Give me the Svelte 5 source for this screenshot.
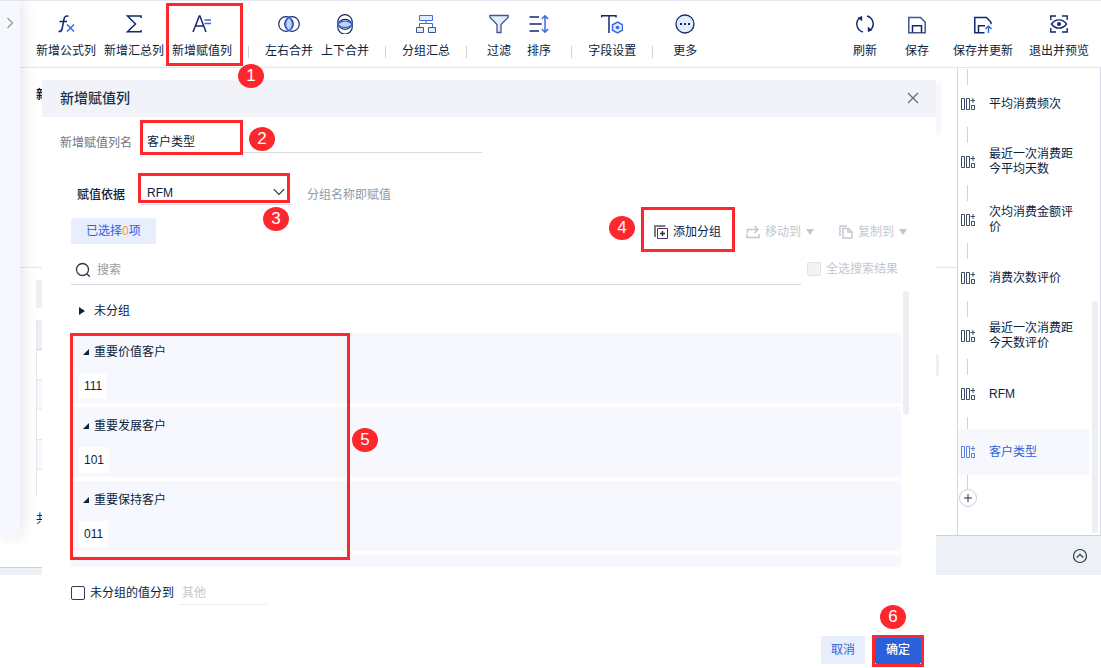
<script>
  // inner markup of the toolbar icons, all on a 22 x 20 grid
  const icons = {
    formula: `<g fill="none" stroke-width="1.5"><path stroke="#14296b" d="M13.5 2.2c-2.6-.9-4 .2-4.5 2.800L7.200 14.500c-.4 2.300-1.400 3.300-3.700 3M4.500 7.500h7.500"/><path stroke="#3a6be0" d="M12 10.500l7 7M19 10.500l-7 7"/></g>`,
    sum: `<path fill="none" stroke="#14296b" stroke-width="1.500" d="M18 4V2H4.500l8 8-8 7.800H18V16"/>`,
    assign: `<g fill="none" stroke-width="1.500"><path stroke="#14296b" d="M2 18L8.300 2h.6L15 18M4.500 12h8.200"/><path stroke="#3a6be0" d="M13.500 6H20M13.500 9.500H20"/></g>`,
    joinH: `<g fill="none" stroke="#14296b" stroke-width="1.200"><circle cx="8" cy="10" r="7.300"/><circle cx="14" cy="10" r="7.300"/><path fill="#bcd3fb" stroke="#3a6be0" d="M11 3.400c4.400 3.300 4.400 9.900 0 13.200-4.400-3.300-4.400-9.900 0-13.200z"/></g>`,
    joinV: `<g fill="none" stroke="#14296b" stroke-width="1.200"><circle cx="11" cy="8" r="7.300"/><circle cx="11" cy="12.700" r="7.300"/><path fill="#bcd3fb" stroke="#3a6be0" d="M4 10.300c3.300-4.200 10.700-4.200 14 0-3.300 4.200-10.700 4.200-14 0z"/></g>`,
    group: `<g fill="#e3ecfd" stroke="#3a6be0"><path d="M4.500 1.500h13v5h-13z"/><path fill="none" d="M11 6.500v3M4.500 13V9.500h13V13"/><path stroke="#43558a" d="M1.500 13.500h7v5h-7zM13.500 13.500h7v5h-7z"/></g>`,
    filter: `<path fill="#e3ecfd" stroke="#43558a" stroke-width="1.300" d="M1.800 1.500h18.400v1.800L13 10.500v8H9v-8L1.800 3.300z"/>`,
    sort: `<g fill="none" stroke-width="1.500"><path stroke="#14296b" d="M1.500 3h9.500M1.500 10h12M1.500 17h9.500"/><path stroke="#3a6be0" d="M17 2v16M13.800 5L17 1.800 20.200 5M13.800 15l3.200 3.200 3.200-3.200"/></g>`,
    field: `<g fill="none" stroke-width="1.500"><path stroke="#14296b" d="M.5 3.500V1.800h14.500v1.700M8 2v17"/><path fill="#e3ecfd" stroke="#3a6be0" d="M16.500 8l5 2.800v5.400l-5 2.800-5-2.800v-5.400z"/></g><circle cx="16.500" cy="13.500" r="1.800" fill="#3a6be0"/>`,
    more: `<circle cx="11" cy="10" r="9" fill="#e3ecfd" stroke="#14296b" stroke-width="1.300"/><g fill="#14296b"><path d="M6 9h2v2H6zM10 9h2v2h-2zM14 9h2v2h-2z"/></g>`,
    refresh: `<g fill="none" stroke="#14296b" stroke-width="1.500"><path d="M9 18A8.200 8.200 0 0 1 5 4.500M13 2A8.200 8.200 0 0 1 17 15.500"/></g><path fill="#14296b" d="M3.500 3.800L8.200 2v5.200zM18.500 16.200l-4.700 1.800v-5.200z"/>`,
    save: `<g fill="none" stroke="#43558a" stroke-width="1.500"><path d="M2.800 3.500h11.700l4.700 4.700v10.600H2.800z"/><path stroke="#14296b" d="M6.500 18.500v-6.700h9v6.700"/></g>`,
    saveUp: `<g fill="none" stroke="#14296b" stroke-width="1.500"><path d="M12.500 18.800H2.800V3.500h11.700l4.500 4.700v2"/><path d="M6.500 18.500v-6.700h6.500"/><path stroke="#3a6be0" d="M16.500 19v-6.500M13.500 15l3-3 3 3"/></g>`,
    preview: `<g fill="none" stroke="#14296b" stroke-width="1.400"><path d="M2.800 6V2H8M14 2h5.200v4M19.200 14v4H14M8 18H2.800v-4M3.500 10c3.800-5.500 11.200-5.500 15 0-3.800 5.500-11.200 5.500-15 0z"/></g><circle cx="11" cy="10" r="2" fill="#14296b"/>`,
  }

  const tools = [
    [
      { icon: 'formula', text: '新增公式列' },
      { icon: 'sum', text: '新增汇总列' },
      { icon: 'assign', text: '新增赋值列' },
    ],
    [
      { icon: 'joinH', text: '左右合并' },
      { icon: 'joinV', text: '上下合并' },
    ],
    [{ icon: 'group', text: '分组汇总' }],
    [
      { icon: 'filter', text: '过滤' },
      { icon: 'sort', text: '排序' },
    ],
    [{ icon: 'field', text: '字段设置' }],
    [{ icon: 'more', text: '更多' }],
  ]

  const steps = [
    '平均消费频次',
    '最近一次消费距今平均天数',
    '次均消费金额评价',
    '消费次数评价',
    '最近一次消费距今天数评价',
    'RFM',
    '客户类型',
  ]
  let current = $state('客户类型')

  const groups = [
    { name: '重要价值客户', value: '111' },
    { name: '重要发展客户', value: '101' },
    { name: '重要保持客户', value: '011' },
  ]

  let columnName = $state('客户类型')
  let basis = $state('RFM')
  let keyword = $state('')
  let useOther = $state(false)

  // numbered guide marks lying over the page: box, then centre of the badge
  const marks = [
    { x: 166, y: 3, w: 77, h: 63, bx: 251, by: 76 },
    { x: 140, y: 120, w: 103, h: 35, bx: 262, by: 139 },
    { x: 138, y: 173, w: 152, h: 30, bx: 276, by: 219 },
    { x: 641, y: 207, w: 94, h: 45, bx: 622, by: 228 },
    { x: 70, y: 333, w: 280, h: 227, bx: 365, by: 440 },
    { x: 872, y: 635, w: 52, h: 32, bx: 893, by: 617 },
  ]
</script>

{#snippet toolButton(tool)}
  <button class="tool" class:short={tool.text.length === 2}>
    <svg width="22" height="20" viewBox="0 0 22 20">{@html icons[tool.icon]}</svg>
    <span>{tool.text}</span>
  </button>
{/snippet}

<div class="page">
  <div class="upper">
    <aside class="drawer">
      <button aria-label="展开">
        <svg width="8" height="12" viewBox="0 0 8 12"><path d="M1.500 1l5 5-5 5" fill="none" stroke="#8d9a98" stroke-width="1.200" /></svg>
      </button>
    </aside>

    <div class="content">
      <header class="toolbar">
        {#each tools as set, i}
          {#if i > 0}<i class="divider"></i>{/if}
          {#each set as tool}{@render toolButton(tool)}{/each}
        {/each}
        <div class="right">
          <div class="wide">
            {@render toolButton({ icon: 'refresh', text: '刷新' })}
            {@render toolButton({ icon: 'save', text: '保存' })}
          </div>
          <div class="long">
            {@render toolButton({ icon: 'saveUp', text: '保存并更新' })}
            {@render toolButton({ icon: 'preview', text: '退出并预览' })}
          </div>
        </div>
      </header>

      <div class="body">
        <main class="sheet">
          <div class="formula"><b>新</b><i></i></div>
          <div class="preview">
            <div class="table">
              <div class="tab"></div>
              <div class="row head"></div>
              <div class="row"></div>
              <div class="row odd"></div>
              <div class="row"></div>
              <div class="row odd"></div>
              <div class="row last"></div>
              <div class="total">共</div>
            </div>
            <i class="handle"></i>
          </div>
        </main>

        <nav class="steps">
          <div class="list">
            {#each steps as step}
              <i class="line"></i>
              <button class="step" class:active={step === current} onclick={() => (current = step)}>
                <svg width="14" height="14" viewBox="0 0 14 14" fill="none" stroke="currentColor">
                  <path d="M.5 1.500h3v11h-3zM5.500 1.500h3v11h-3zM10.500 8.500h3v4h-3zM12 1v5M9.500 3.500h5" />
                </svg>
                <span>{step}</span>
              </button>
            {/each}
            <i class="line"></i>
            <button class="add" aria-label="添加步骤">
              <svg width="8" height="8" viewBox="0 0 8 8"><path d="M4 0v8M0 4h8" stroke="#1f3547" /></svg>
            </button>
          </div>
          <div class="track"><i></i></div>
        </nav>
      </div>
    </div>
  </div>

  <footer class="bottom">
    <div class="strip"></div>
    <div class="bar">
      <button aria-label="收起">
        <svg width="16" height="16" viewBox="0 0 16 16" fill="none" stroke="#2b3947" stroke-width="1.200">
          <circle cx="8" cy="8" r="6.500" /><path d="M4.800 9.500L8 6.300l3.200 3.200" />
        </svg>
      </button>
    </div>
  </footer>

  <div class="dialog" role="dialog" aria-labelledby="title">
    <div class="caption">
      <h2 id="title">新增赋值列</h2>
      <button aria-label="关闭">
        <svg width="12" height="12" viewBox="0 0 12 12"><path d="M1 1l10 10M11 1L1 11" stroke="#5c6b76" stroke-width="1.200" /></svg>
      </button>
    </div>

    <div class="name">
      <label for="name">新增赋值列名</label>
      <input id="name" bind:value={columnName} />
    </div>

    <div class="basis">
      <label for="basis">赋值依据</label>
      <div class="select">
        <select id="basis" bind:value={basis}>
          <option>RFM</option>
        </select>
        <svg width="12" height="8" viewBox="0 0 12 8"><path d="M.8 1.200L6 6.500l5.200-5.300" fill="none" stroke="#2b3947" stroke-width="1.200" /></svg>
      </div>
      <span class="hint">分组名称即赋值</span>
    </div>

    <div class="actions">
      <span class="picked">已选择<em>0</em>项</span>
      <button class="act">
        <svg width="14" height="14" viewBox="0 0 14 14" fill="none" stroke="#5a2a6e">
          <path d="M3.500 3.500h10v10h-10z" /><path d="M1 12V1h10.500" stroke="#7d827c" stroke-width="2" /><path d="M8.500 6v5M6 8.500h5" stroke="#26352e" stroke-width="1.400" />
        </svg>
        添加分组
      </button>
      <button class="act" disabled>
        <svg width="14" height="14" viewBox="0 0 14 14" fill="none" stroke="currentColor" stroke-width="1.500">
          <path d="M1 9v3.500h12V9M1.500 8V4.500H12M8.500 1L12 4.500 8.500 8" />
        </svg>
        移动到 <i class="caret"></i>
      </button>
      <button class="act" disabled>
        <svg width="14" height="14" viewBox="0 0 14 14" fill="none" stroke="currentColor" stroke-width="1.400">
          <path d="M1 11V1h7M4 3.500h5.500L13 7v6H4zM9 3.500V7h4" />
        </svg>
        复制到 <i class="caret"></i>
      </button>
    </div>

    <div class="search">
      <div class="box">
        <svg width="16" height="16" viewBox="0 0 16 16" fill="none" stroke="#2b3947" stroke-width="1.300">
          <circle cx="7.500" cy="7.500" r="6" /><path d="M11.800 11.800l3 3" />
        </svg>
        <input placeholder="搜索" aria-label="搜索" bind:value={keyword} />
      </div>
      <label><input type="checkbox" disabled />全选搜索结果</label>
    </div>

    <div class="tree">
      <div class="items">
        <div class="ungrouped">
          <svg width="6" height="8" viewBox="0 0 6 8"><path d="M0 0l6 4-6 4z" fill="#0c2340" /></svg>
          未分组
        </div>
        {#each groups as group}
          <section>
            <h3>
              <svg width="6" height="6" viewBox="0 0 6 6"><path d="M6 0v6H0z" fill="#0c2340" /></svg>
              {group.name}
            </h3>
            <span class="chip">{group.value}</span>
          </section>
        {/each}
        <section class="rest"></section>
      </div>
      <i class="thumb"></i>
    </div>

    <div class="other">
      <label><input type="checkbox" bind:checked={useOther} />未分组的值分到</label>
      <input class="to" placeholder="其他" aria-label="其他" disabled={!useOther} />
    </div>

    <div class="buttons">
      <button class="cancel">取消</button>
      <button class="ok">确定</button>
    </div>
  </div>

  {#each marks as mark, i}
    <div class="mark" style="left: {mark.x}px; top: {mark.y}px; width: {mark.w}px; height: {mark.h}px"></div>
    <span class="badge" style="left: {mark.bx}px; top: {mark.by}px">{i + 1}</span>
  {/each}
</div>

<style>
  :global(body) {
    background: #fff;
  }

  .page {
    position: relative;
    min-height: 100vh;
    overflow: hidden;
    font: 12px/16px "Liberation Sans", "Noto Sans CJK SC", sans-serif;
    color: #0c2340;
  }

  .page :global(*) {
    box-sizing: border-box;
  }

  button, input, select {
    margin: 0;
    padding: 0;
    border: 0;
    background: none;
    font: inherit;
    color: inherit;
    outline: none;
  }

  svg, i {
    display: block;
    flex: none;
  }

  label {
    white-space: nowrap;
  }

  .upper {
    display: flex;
  }

  .drawer {
    position: relative;
    flex: none;
    width: 20px;
    padding: 16px 0 0 6px;
    border-top: 1px solid #e4e7f1;
    background: #f7f8fd;
    box-shadow: 2px 0 16px rgba(20, 30, 60, 0.12);
    clip-path: inset(0 -20px -10px 0);
  }

  .content {
    flex: 1;
    min-width: 0;
  }

  /* toolbar */

  .toolbar {
    display: flex;
    height: 68px;
    padding: 13px 4px 0 12px;
    border-top: 1px solid #e4e7f1;
    border-bottom: 1px solid #e4e6ea;
  }

  .tool {
    display: flex;
    flex-direction: column;
    align-items: center;
    gap: 9px;
    height: 46px;
    padding: 0 4px;
    white-space: nowrap;
  }

  .tool.short {
    padding: 0 8px;
  }

  .divider {
    width: 1px;
    height: 12px;
    margin: 32px 12px 0;
    background: #cdd1d9;
  }

  .right, .wide, .long {
    display: flex;
  }

  .right {
    gap: 2px;
    margin-left: auto;
  }

  .wide .tool {
    padding: 0 14px;
  }

  .long .tool {
    padding: 0 8px;
  }

  /* sheet behind the dialog */

  .body {
    display: flex;
  }

  .sheet {
    flex: 1;
  }

  .formula {
    display: flex;
    justify-content: space-between;
    height: 200px;
    padding: 15px 16px 0;
    border-bottom: 1px solid #e4e6ee;
  }

  .formula b {
    padding-top: 4px;
  }

  .formula i {
    width: 24px;
    height: 52px;
    background: #f7f8fd;
  }

  .preview {
    display: flex;
    padding: 12px 18px 0 16px;
  }

  .table {
    flex: 1;
    padding-right: 16px;
  }

  .tab {
    height: 28px;
    margin-bottom: 12px;
    border-radius: 2px;
    background: #eeeff3;
  }

  .handle {
    width: 12px;
    height: 22px;
    margin-top: 74px;
    border-radius: 3px;
    background: #eeeff3;
  }

  .row {
    height: 30px;
    border: solid #e4e6ee;
    border-width: 0 0 1px 1px;
  }

  .row.head {
    border-top-width: 1px;
    border-bottom-color: #ccd2de;
    background: #edf1f6;
  }

  .row.odd {
    background: #f7f8fd;
  }

  .row.last {
    height: 26px;
    border-bottom: 0;
  }

  .total {
    padding-top: 15px;
  }

  /* steps */

  .steps {
    display: flex;
    flex: none;
    width: 144px;
    border: solid #d5d8e0;
    border-width: 0 1px;
  }

  .list {
    flex: 1;
    padding: 1px 0 28px;
  }

  .line {
    width: 1px;
    height: 16px;
    margin: 0 0 -4px 9px;
    background: #cfd3dc;
  }

  .step {
    position: relative;
    display: flex;
    align-items: center;
    gap: 14px;
    width: 100%;
    height: 46px;
    padding: 0 12px 0 3px;
    line-height: 15px;
    text-align: left;
  }

  .step svg {
    opacity: 0.8;
  }

  .step.active {
    background: #f7f8fd;
    color: #3060dc;
  }

  .add {
    position: relative;
    display: grid;
    place-items: center;
    width: 18px;
    height: 18px;
    margin: 2px 0 0 1px;
    border: 1px solid #c8ccd4;
    border-radius: 50%;
    background: #fff;
  }

  .track {
    display: flex;
    align-items: flex-end;
    width: 10px;
    padding: 0 2px 2px;
  }

  .track i {
    width: 6px;
    height: 50%;
    border-radius: 3px;
    background: #eeeff3;
  }

  .bottom {
    display: flex;
    align-items: flex-end;
    justify-content: space-between;
  }

  .strip, .bar {
    border-top: 1px solid #ccd2de;
    background: #edf1f6;
  }

  .strip {
    width: 42px;
    height: 8px;
  }

  .bar {
    display: flex;
    align-items: center;
    justify-content: flex-end;
    width: 165px;
    height: 40px;
    padding-right: 13px;
  }

  /* dialog */

  .dialog {
    position: absolute;
    top: 80px;
    left: 42px;
    right: 165px;
    padding-bottom: 4px;
    background: #fff;
  }

  .caption {
    display: flex;
    align-items: center;
    justify-content: space-between;
    height: 37px;
    padding: 0 17px 2px 18px;
    background: #f2f3f8;
    color: #1b3049;
  }

  h2 {
    margin: 0;
    font-size: 14px;
    font-weight: 500;
  }

  .name {
    display: flex;
    align-items: center;
    gap: 8px;
    padding: 11px 0 0 18px;
  }

  .name label, .basis label, .hint {
    padding-top: 4px;
  }

  .name label {
    color: #6c7684;
  }

  .name input {
    width: 342px;
    height: 25px;
    padding-left: 7px;
    border-bottom: 1px solid #d9dbe2;
  }

  .basis {
    display: flex;
    align-items: center;
    margin-top: 27px;
    padding-left: 35px;
  }

  .basis label {
    font-weight: 500;
  }

  .select {
    display: grid;
    align-items: center;
    width: 150px;
    height: 25px;
    margin: 0 16px;
    border-bottom: 1px solid #d9dbe2;
  }

  .select select, .select svg {
    grid-area: 1 / 1;
  }

  .select select {
    appearance: none;
    height: 24px;
    padding: 2px 0 0 6px;
  }

  .select svg {
    justify-self: end;
    margin-right: 6px;
    pointer-events: none;
  }

  .hint {
    color: #8f9aa6;
  }

  .actions {
    display: flex;
    align-items: center;
    height: 26px;
    margin: 13px 29px 0;
  }

  .picked {
    margin-right: auto;
    padding: 5px 15px;
    border-radius: 2px;
    background: #e8eefb;
    color: #3060dc;
  }

  .picked em {
    font-style: normal;
    color: #ff9a3c;
  }

  .act {
    display: flex;
    align-items: center;
    gap: 5px;
    margin-left: 26px;
    padding-top: 2px;
  }

  .act:disabled {
    margin-left: 25px;
    color: #c3c7cf;
  }

  .caret {
    border: solid transparent;
    border-width: 6px 4px 0;
    border-top-color: #c3c7cf;
  }

  .search {
    display: flex;
    align-items: center;
    gap: 6px;
    margin: 12px 38px 0 29px;
  }

  .search .box {
    display: flex;
    flex: 1;
    align-items: center;
    gap: 6px;
    height: 29px;
    padding-left: 4px;
    border-bottom: 1px solid #d9dbe2;
  }

  .box input {
    flex: 1;
  }

  .box input::placeholder {
    color: #969ca3;
  }

  .search label, .other label {
    display: flex;
    align-items: center;
    gap: 5px;
    padding-bottom: 3px;
  }

  .search label {
    color: #c3c7cf;
  }

  input[type="checkbox"] {
    appearance: none;
    width: 14px;
    height: 14px;
    border: 1px solid #2c3d55;
    border-radius: 2px;
  }

  input[type="checkbox"]:checked {
    background: #2c60da;
  }

  .search input[type="checkbox"] {
    border-color: #dfe2e9;
    background: #f2f3f8;
  }

  .tree {
    display: flex;
    gap: 2px;
    margin: 6px 27px 0 29px;
  }

  .items {
    flex: 1;
  }

  .ungrouped {
    display: flex;
    align-items: center;
    gap: 9px;
    height: 40px;
    margin-bottom: 2px;
    padding-left: 8px;
  }

  section {
    height: 70px;
    margin-bottom: 4px;
    padding-left: 8px;
    background: #f7f8fd;
  }

  section.rest {
    height: 12px;
    margin-bottom: 0;
  }

  h3 {
    display: flex;
    align-items: center;
    gap: 5px;
    height: 38px;
    margin: 0 0 2px;
    padding-left: 4px;
    font-size: 12px;
    font-weight: 400;
  }

  .chip {
    display: inline-block;
    padding: 5px;
    border-radius: 2px;
    background: #fff;
  }

  .thumb {
    width: 6px;
    height: 124px;
    border-radius: 3px;
    background: #eeeff3;
  }

  .other {
    display: flex;
    align-items: center;
    gap: 5px;
    margin: 16px 29px 0;
  }

  .other .to {
    width: 88px;
    height: 22px;
    padding: 0 0 2px 3px;
    border-bottom: 1px solid #eeeff3;
  }

  .to::placeholder {
    color: #c3c7cf;
  }

  .buttons {
    display: flex;
    justify-content: flex-end;
    gap: 10px;
    margin: 31px 15px 0;
  }

  .buttons button {
    height: 28px;
    padding: 0 10px;
    border-radius: 2px;
  }

  .cancel {
    background: #e8eefb;
    color: #3060dc;
  }

  .buttons .ok {
    border: 1px solid #2c60da;
    background: #2c60da;
    color: #fff;
    font-weight: 500;
  }

  /* guide marks */

  .mark {
    position: absolute;
    border: 3px solid #fd272d;
    pointer-events: none;
  }

  .badge {
    position: absolute;
    width: 26px;
    height: 24px;
    margin: -12px 0 0 -13px;
    border-radius: 50%;
    background: #fd272d;
    color: #fff;
    font-size: 17px;
    line-height: 24px;
    text-align: center;
  }
</style>
